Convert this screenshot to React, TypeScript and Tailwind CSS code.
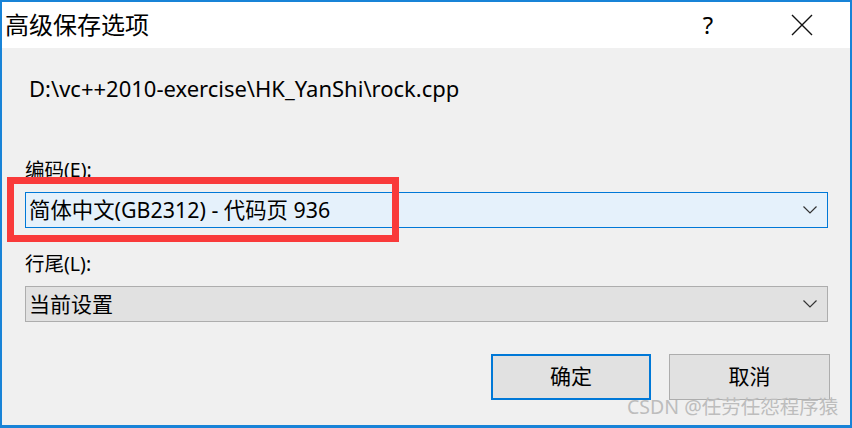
import React from "react";

const FONT = '"Noto Sans", "Noto Sans CJK SC", sans-serif';

function Chevron() {
  return (
    <svg width="14" height="8" viewBox="0 0 14 8" className="shrink-0">
      <polyline points="0.5,0.5 7,7 13.5,0.5" fill="none" stroke="#333" strokeWidth="1.2" />
    </svg>
  );
}

export default function App() {
  return (
    <div
      className="relative w-[852px] h-[428px] overflow-hidden border-[#1883d7] border-t-2 border-l-2 border-r-2 border-b-[3px] bg-[#f0f0f0] text-black"
      style={{ fontFamily: FONT }}
    >
      {/* title bar */}
      <div className="h-[46px] bg-white flex items-center">
        <div className="pl-[3px] text-[24px] leading-none">高级保存选项</div>
        <div className="ml-auto flex items-center">
          <div className="w-[20px] text-center text-[24px] leading-none mr-[73px]">?</div>
          <svg width="22" height="22" viewBox="0 0 22 22" className="mr-[37px]">
            <path d="M1 1 L21 21 M21 1 L1 21" stroke="#111" strokeWidth="1.4" fill="none" />
          </svg>
        </div>
      </div>

      {/* body */}
      <div className="flex flex-col pl-[23px]">
        <div className="mt-[28px] h-[24px] leading-[24px] pl-[4px] text-[22px]">
          D:\vc++2010-exercise\HK_YanShi\rock.cpp
        </div>

        <div className="mt-[58px] h-[24px] leading-[24px] text-[19.5px]">编码(E):</div>

        <div className="mt-[10px] w-[803px] h-[36px] border border-[#0078d7] bg-[#e5f1fb] flex items-center pl-[3px] pr-[10px]">
          <span className="text-[21.4px] leading-none">简体中文(GB2312) - 代码页 936</span>
          <span className="ml-auto"><Chevron /></span>
        </div>

        <div className="mt-[24px] h-[24px] leading-[24px] text-[19.5px]">行尾(L):</div>

        <div className="mt-[10px] w-[803px] h-[36px] border border-[#adadad] bg-[#e1e1e1] flex items-center pl-[3px] pr-[10px]">
          <span className="text-[21px] leading-none">当前设置</span>
          <span className="ml-auto"><Chevron /></span>
        </div>

        <div className="mt-[32px] flex justify-end gap-[18px] pr-[20px]">
          <button className="w-[160px] h-[46px] border-2 border-[#0078d7] bg-[#e1e1e1] text-[21px] flex items-center justify-center">
            确定
          </button>
          <button className="w-[161px] h-[46px] border border-[#adadad] bg-[#e1e1e1] text-[21px] flex items-center justify-center">
            取消
          </button>
        </div>
      </div>

      {/* red highlight box */}
      <div className="absolute left-[5px] top-[175px] w-[392px] h-[65px] border-[7px] border-[#f93a3a]" />

      {/* watermark */}
      <div className="absolute left-[625px] top-[393px] text-[19.5px] leading-[24px] text-[#bdbdbd] whitespace-nowrap">
        CSDN @任劳任怨程序猿
      </div>
    </div>
  );
}
